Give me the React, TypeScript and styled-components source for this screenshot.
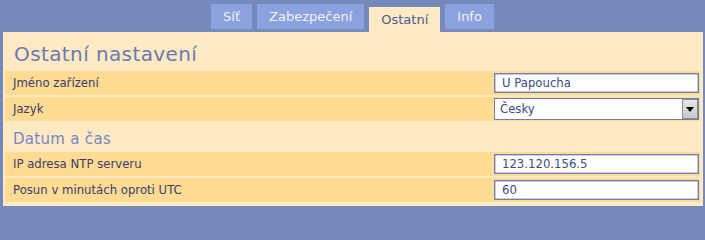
import React from 'react';
import styled, { createGlobalStyle } from 'styled-components';

const GlobalStyle = createGlobalStyle`
  html, body {
    margin: 0;
    padding: 0;
    background: #7689bc;
    font-family: "DejaVu Sans", Verdana, sans-serif;
  }
`;

const Page = styled.div`
  width: 705px;
  height: 206px;
  overflow: hidden;
  background: #7689bc;
`;

const TabBar = styled.div`
  height: 32px;
  display: flex;
  justify-content: center;
  align-items: flex-start;
  gap: 5px;
  padding-top: 4px;
  box-sizing: border-box;
`;

const Tab = styled.div<{ $active?: boolean }>`
  height: 25px;
  margin-top: ${props => (props.$active ? '3px' : '0')};
  padding: 0 12px;
  display: flex;
  align-items: center;
  font-size: 13px;
  background: ${props => (props.$active ? '#ffeac4' : '#8ba2de')};
  color: ${props => (props.$active ? '#4c5a94' : '#eef2ff')};
  box-sizing: border-box;
`;

const Panel = styled.div`
  margin: 0 2px 0 3px;
  background: #ffeac4;
  padding: 0 3px 3px 2px;
  height: 174px;
  box-sizing: border-box;
`;

const Title = styled.h1`
  margin: 0;
  height: 37px;
  padding: 10px 0 0 9px;
  box-sizing: border-box;
  font-size: 20px;
  font-weight: normal;
  letter-spacing: 0.4px;
  color: #6a78b2;
  line-height: 24px;
`;

const Section = styled.h2`
  margin: 0;
  height: 29px;
  padding: 8px 0 0 8px;
  box-sizing: border-box;
  font-size: 15px;
  font-weight: normal;
  letter-spacing: 0.3px;
  color: #7886c0;
  line-height: 20px;
`;

const Row = styled.div`
  margin-top: 2px;
  height: 24px;
  background: #ffdb94;
  display: flex;
  align-items: center;
  justify-content: space-between;
  padding: 0 1px 0 8px;
`;

const Label = styled.span`
  font-size: 11.7px;
  color: #3a3c6c;
`;

const TextInput = styled.input`
  width: 205px;
  height: 20px;
  box-sizing: border-box;
  border: 1px solid #6f7fb3;
  box-shadow: inset 0 0 0 0.5px #8a98c6;
  background: #fff;
  padding: 0 0 0 7px;
  margin: 0;
  font-family: "DejaVu Sans", Verdana, sans-serif;
  font-size: 11.7px;
  color: #3d4a86;
  outline: none;
`;

const Select = styled.div`
  width: 205px;
  height: 22px;
  box-sizing: border-box;
  border: 1px solid #6f7fb3;
  background: #fff;
  display: flex;
  align-items: stretch;
`;

const SelectValue = styled.span`
  flex: 1;
  display: flex;
  align-items: center;
  padding-left: 5px;
  font-size: 11.7px;
  color: #3d4a86;
`;

const SelectButton = styled.span`
  width: 16px;
  box-sizing: border-box;
  border: 1px solid #8c8c8c;
  background: linear-gradient(#e6e6e6, #c9c9c9);
  display: flex;
  align-items: center;
  justify-content: center;
`;

const Arrow = styled.span`
  width: 0;
  height: 0;
  border-left: 4px solid transparent;
  border-right: 4px solid transparent;
  border-top: 5px solid #000;
`;

export default function App() {
  return (
    <Page>
      <GlobalStyle />
      <TabBar>
        <Tab>Síť</Tab>
        <Tab>Zabezpečení</Tab>
        <Tab $active>Ostatní</Tab>
        <Tab>Info</Tab>
      </TabBar>
      <Panel>
        <Title>Ostatní nastavení</Title>
        <Row>
          <Label>Jméno zařízení</Label>
          <TextInput readOnly value="U Papoucha" />
        </Row>
        <Row>
          <Label>Jazyk</Label>
          <Select>
            <SelectValue>Česky</SelectValue>
            <SelectButton>
              <Arrow />
            </SelectButton>
          </Select>
        </Row>
        <Section>Datum a čas</Section>
        <Row>
          <Label>IP adresa NTP serveru</Label>
          <TextInput readOnly value="123.120.156.5" />
        </Row>
        <Row>
          <Label>Posun v minutách oproti UTC</Label>
          <TextInput readOnly value="60" />
        </Row>
      </Panel>
    </Page>
  );
}
